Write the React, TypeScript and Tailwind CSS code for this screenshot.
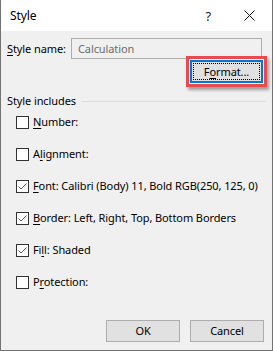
import React from "react";

const font = { fontFamily: '"Noto Sans", "Open Sans", sans-serif' };

type Item = { pre: string; key: string; post: string; checked: boolean };

const items: Item[] = [
  { pre: "", key: "N", post: "umber:", checked: false },
  { pre: "A", key: "l", post: "ignment:", checked: false },
  { pre: "", key: "F", post: "ont: Calibri (Body) 11, Bold RGB(250, 125, 0)", checked: true },
  { pre: "", key: "B", post: "order: Left, Right, Top, Bottom Borders", checked: true },
  { pre: "Fi", key: "l", post: "l: Shaded", checked: true },
  { pre: "P", key: "r", post: "otection:", checked: false },
];

function Checkbox({ checked }: { checked: boolean }) {
  return (
    <span className="flex h-[13px] w-[13px] shrink-0 items-center justify-center border border-[#333333] bg-white">
      {checked && (
        <svg width="11" height="11" viewBox="0 0 11 11">
          <polyline points="1.5,5.5 4,8 9.5,2.5" fill="none" stroke="#5f5f5f" strokeWidth="1" />
        </svg>
      )}
    </span>
  );
}

function Accel({ pre, k, post }: { pre: string; k: string; post: string }) {
  return (
    <span className="whitespace-nowrap">
      {pre}
      <span className="underline underline-offset-2">{k}</span>
      {post}
    </span>
  );
}

export default function App() {
  return (
    <div
      style={font}
      className="flex h-[351px] w-[273px] flex-col border-x border-b border-[#737373] bg-[#f0f0f0] text-[11px] leading-[16px] tracking-[-0.1px] text-black"
    >
      {/* title bar */}
      <div className="flex h-[31px] shrink-0 items-center bg-white pl-[9px]">
        <span className="text-[12px]">Style</span>
        <span className="ml-auto mr-[33px] text-[13px] text-[#222]">?</span>
        <svg width="11" height="11" viewBox="0 0 11 11" className="mr-[17px]">
          <path d="M0.5 0.5 L10.5 10.5 M10.5 0.5 L0.5 10.5" stroke="#111" strokeWidth="1" />
        </svg>
      </div>

      {/* style name */}
      <div className="mt-[7px] flex h-[21px] items-center pl-[6px] pr-[10px]">
        <Accel pre="" k="S" post="tyle name:" />
        <div className="ml-auto flex h-[21px] w-[191px] shrink-0 items-center border border-[#adadad] bg-[#f0f0f0] pl-[6px] text-[#6d6d6d]">
          Calculation
        </div>
      </div>

      {/* format button, highlighted */}
      <div className="-mt-[3px] flex justify-end pr-[5px]">
        <div className="border-[3px] border-[#ea4a4e] p-[1px] shadow-[2px_3px_3px_rgba(0,0,0,0.35)]">
          <div className="flex h-[23px] w-[73px] items-center justify-center border-2 border-[#0078d7] bg-[#e1e1e1]">
            <div className="flex h-[17px] w-[67px] items-center justify-center border border-dotted border-black">
              <Accel pre="F" k="o" post="rmat..." />
            </div>
          </div>
        </div>
      </div>

      {/* style includes */}
      <div className="mt-[6px] flex h-[16px] items-center pl-[6px] pr-[6px]">
        <span className="whitespace-nowrap">Style includes</span>
        <span className="ml-[5px] h-px flex-1 bg-[#dcdcdc]" />
      </div>

      <div className="-mt-[3px] flex flex-col pl-[15px]">
        {items.map((it) => (
          <div key={it.post} className="flex h-[32px] items-center gap-[4px]">
            <Checkbox checked={it.checked} />
            <Accel pre={it.pre} k={it.key} post={it.post} />
          </div>
        ))}
      </div>

      {/* buttons */}
      <div className="mt-[22px] flex justify-end gap-[10px] pr-[8px]">
        <button className="flex h-[22px] w-[74px] items-center justify-center border border-[#adadad] bg-[#e1e1e1]">
          OK
        </button>
        <button className="flex h-[22px] w-[74px] items-center justify-center border border-[#adadad] bg-[#e1e1e1]">
          Cancel
        </button>
      </div>
    </div>
  );
}
